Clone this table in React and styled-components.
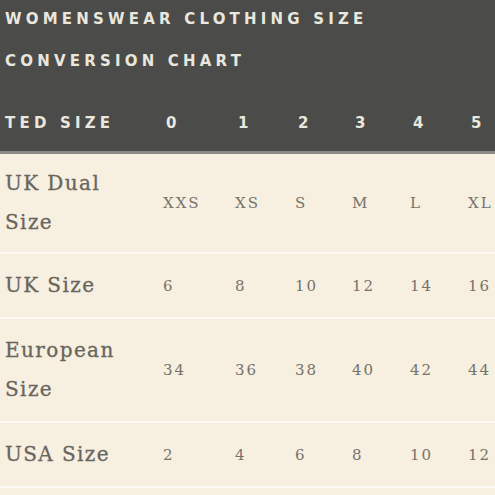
import React from 'react';
import styled, { createGlobalStyle } from 'styled-components';

const GlobalStyle = createGlobalStyle`
    html, body {
        margin: 0;
        padding: 0;
        background: #f7efe0;
        overflow: hidden;
    }
`;

const Page = styled.div`
    width: 495px;
    height: 495px;
    overflow: hidden;
    background: #f7efe0;
`;

const Header = styled.div`
    background: #4b4b49;
    padding: 0 5px;
    height: 96px;
    box-sizing: border-box;
    overflow: hidden;
`;

const TitleLine = styled.div`
    font-family: "DejaVu Sans", Verdana, sans-serif;
    font-weight: bold;
    font-size: 15px;
    letter-spacing: 4.2px;
    line-height: 42px;
    color: #e9e7de;
    white-space: nowrap;
    &:first-child {
        margin-top: -2px;
    }
`;

const Table = styled.table`
    border-collapse: collapse;
    table-layout: fixed;
    width: 530px;
`;

const HeadRow = styled.tr`
    background: #4b4b49;
    height: 56px;
    border-bottom: 3px solid #8c8a84;
`;

const HeadCell = styled.th`
    font-family: "DejaVu Sans", Verdana, sans-serif;
    font-weight: bold;
    font-size: 15px;
    letter-spacing: 4.2px;
    color: #e9e7de;
    text-align: left;
    padding: 0 0 0 ${p => (p.$first ? 5 : 3)}px;
    white-space: nowrap;
    vertical-align: middle;
`;

const BodyRow = styled.tr`
    height: ${p => p.$h}px;
    border-bottom: 2px solid #fdfaf3;
`;

const LabelCell = styled.td`
    font-family: "DejaVu Serif", Georgia, serif;
    font-size: 20px;
    letter-spacing: 1.4px;
    line-height: 39px;
    color: #67655d;
    padding: 0 0 0 5px;
    vertical-align: middle;
    -webkit-text-stroke: 0.3px #67655d;
`;

const ValueCell = styled.td`
    font-family: "DejaVu Serif", Georgia, serif;
    font-size: 15px;
    letter-spacing: 2px;
    color: #75736b;
    padding: 0;
    vertical-align: middle;
    white-space: nowrap;
`;

const colWidths = [163, 72, 60, 57, 58, 58, 62];

const tedSizes = ['0', '1', '2', '3', '4', '5'];

const rows = [
    { label: ['UK Dual', 'Size'], values: ['XXS', 'XS', 'S', 'M', 'L', 'XL'], height: 101 },
    { label: ['UK Size'], values: ['6', '8', '10', '12', '14', '16'], height: 65 },
    { label: ['European', 'Size'], values: ['34', '36', '38', '40', '42', '44'], height: 104 },
    { label: ['USA Size'], values: ['2', '4', '6', '8', '10', '12'], height: 65 },
];

const App = () => {
    return (
        <Page>
            <GlobalStyle />
            <Header>
                <TitleLine>WOMENSWEAR CLOTHING SIZE</TitleLine>
                <TitleLine>CONVERSION CHART</TitleLine>
            </Header>
            <Table>
                <colgroup>
                    {colWidths.map((w, i) => <col key={i} style={{ width: w }} />)}
                </colgroup>
                <thead>
                    <HeadRow>
                        <HeadCell $first>TED SIZE</HeadCell>
                        {tedSizes.map(s => <HeadCell key={s}>{s}</HeadCell>)}
                        <HeadCell />
                    </HeadRow>
                </thead>
                <tbody>
                    {rows.map(r => (
                        <BodyRow key={r.label.join(' ')} $h={r.height}>
                            <LabelCell>
                                {r.label.map((l, i) => <div key={i}>{l}</div>)}
                            </LabelCell>
                            {r.values.map((v, i) => <ValueCell key={i}>{v}</ValueCell>)}
                            <ValueCell />
                        </BodyRow>
                    ))}
                </tbody>
            </Table>
        </Page>
    );
};

export default App;
